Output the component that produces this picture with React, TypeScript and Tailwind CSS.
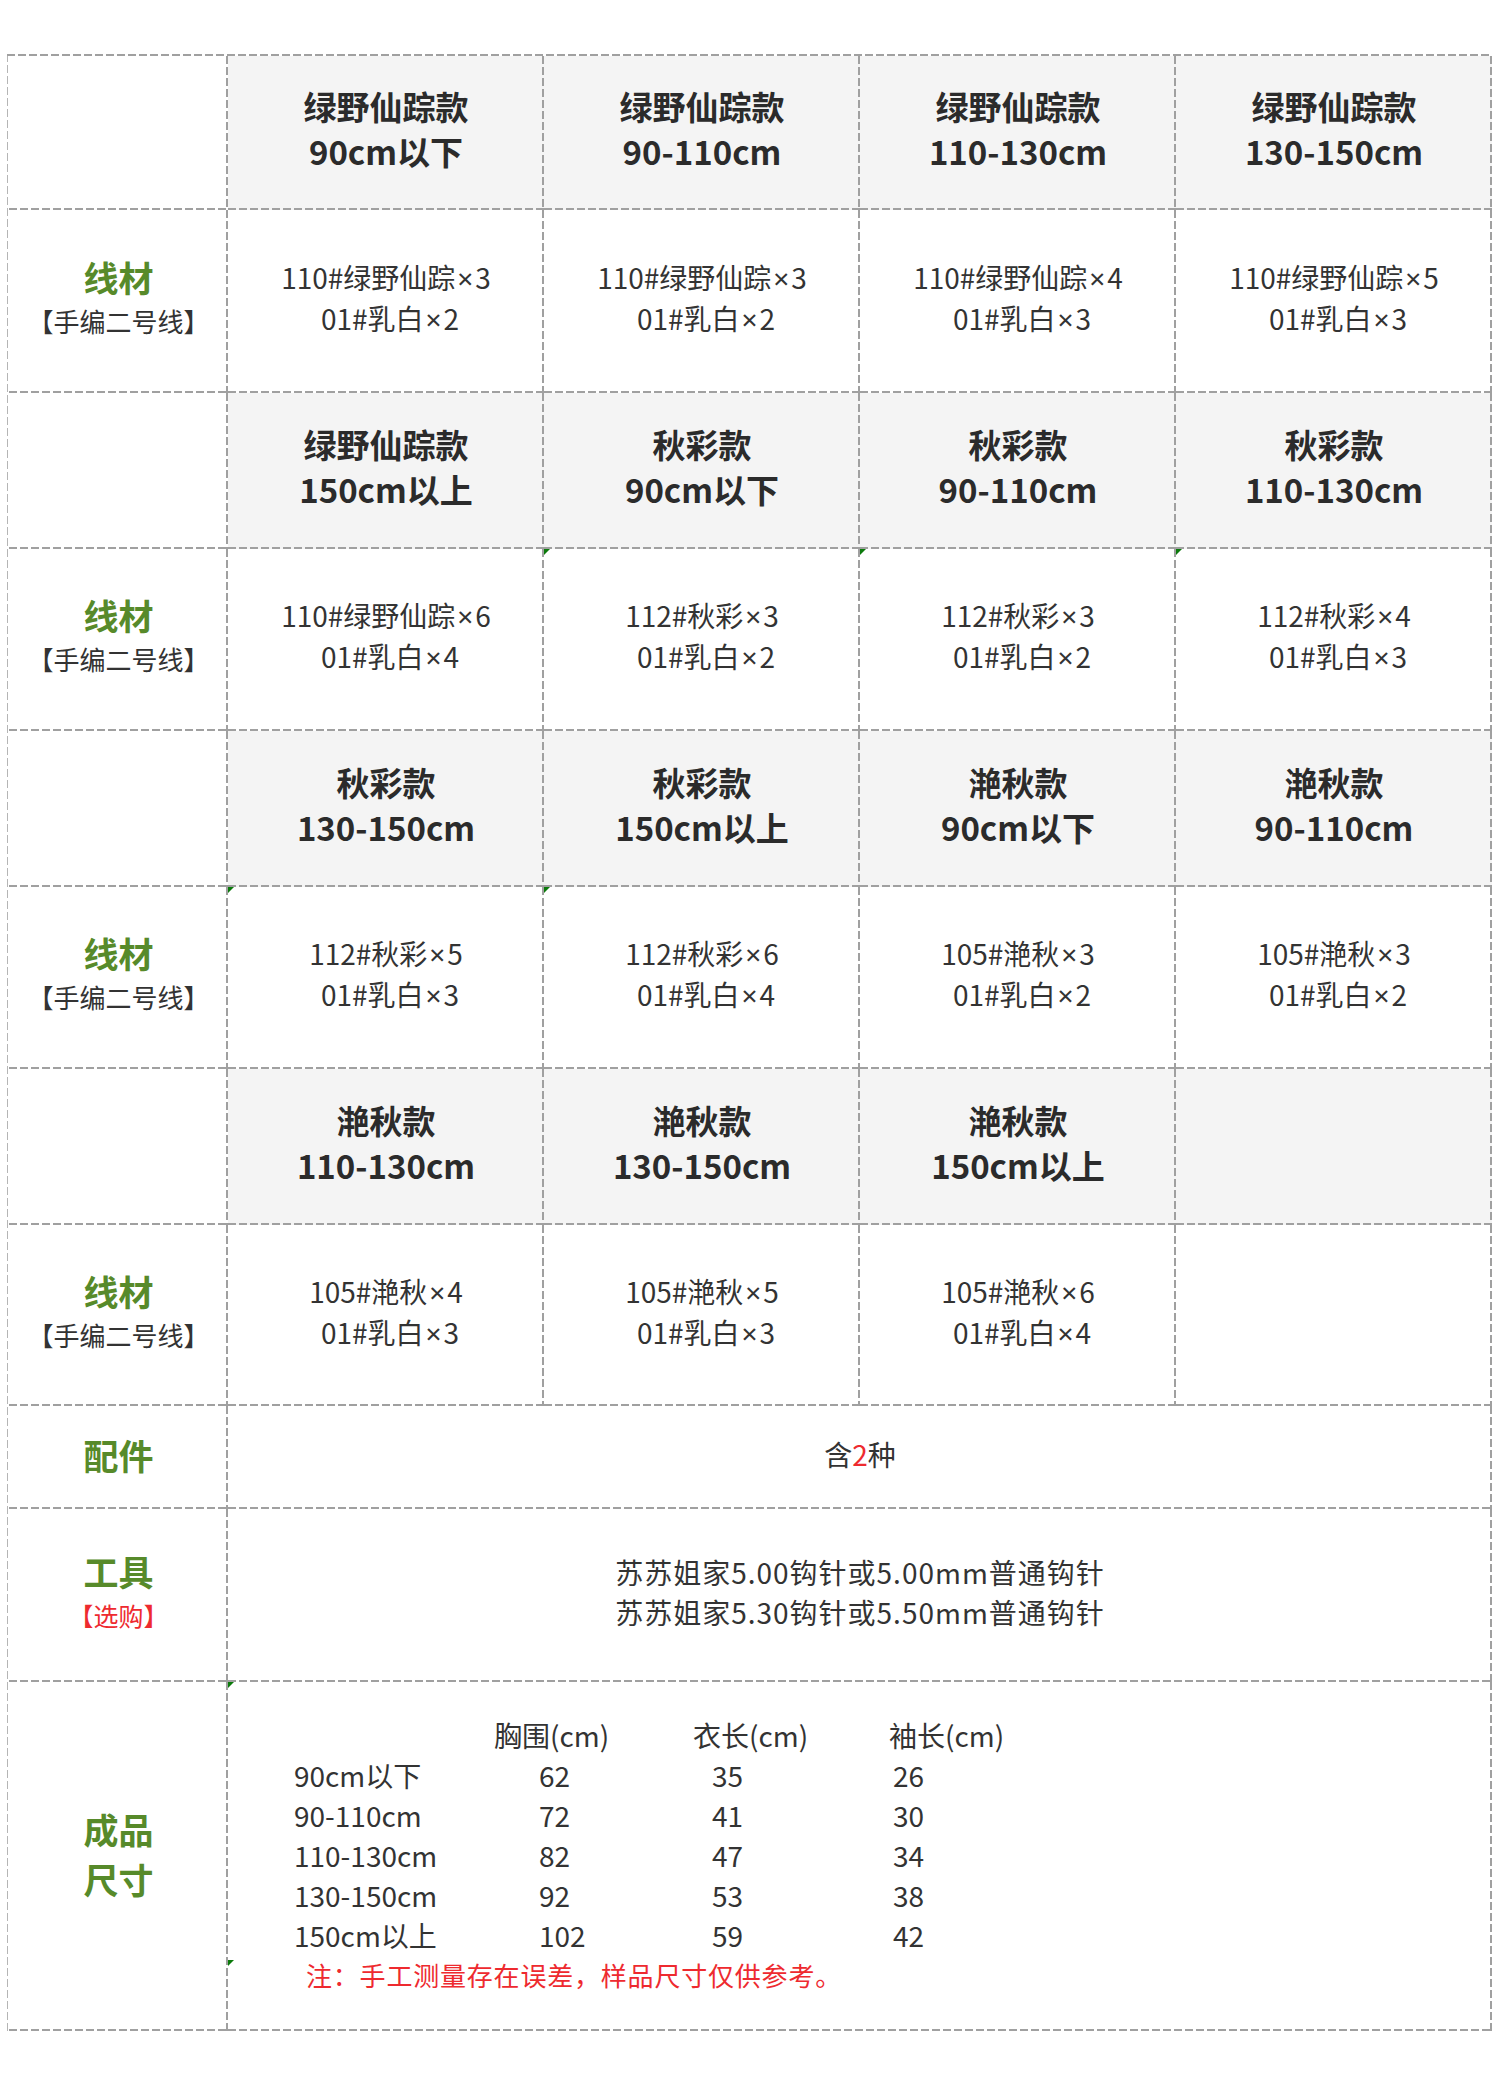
import React from "react";

const CELL =
  "relative [background-image:repeating-linear-gradient(90deg,#a0a0a0_0_8px,transparent_8px_11px),repeating-linear-gradient(180deg,#a0a0a0_0_8px,transparent_8px_11px)] [background-size:100%_2px,2px_100%] [background-position:left_bottom,right_top] bg-no-repeat";

type Pair = [string, string];
type Block = { heads: (Pair | null)[]; data: (Pair | null)[]; tri: number[] };

const blocks: Block[] = [
  {
    heads: [
      ["绿野仙踪款", "90cm以下"],
      ["绿野仙踪款", "90-110cm"],
      ["绿野仙踪款", "110-130cm"],
      ["绿野仙踪款", "130-150cm"],
    ],
    data: [
      ["110#绿野仙踪×3", "01#乳白×2"],
      ["110#绿野仙踪×3", "01#乳白×2"],
      ["110#绿野仙踪×4", "01#乳白×3"],
      ["110#绿野仙踪×5", "01#乳白×3"],
    ],
    tri: [],
  },
  {
    heads: [
      ["绿野仙踪款", "150cm以上"],
      ["秋彩款", "90cm以下"],
      ["秋彩款", "90-110cm"],
      ["秋彩款", "110-130cm"],
    ],
    data: [
      ["110#绿野仙踪×6", "01#乳白×4"],
      ["112#秋彩×3", "01#乳白×2"],
      ["112#秋彩×3", "01#乳白×2"],
      ["112#秋彩×4", "01#乳白×3"],
    ],
    tri: [1, 2, 3],
  },
  {
    heads: [
      ["秋彩款", "130-150cm"],
      ["秋彩款", "150cm以上"],
      ["滟秋款", "90cm以下"],
      ["滟秋款", "90-110cm"],
    ],
    data: [
      ["112#秋彩×5", "01#乳白×3"],
      ["112#秋彩×6", "01#乳白×4"],
      ["105#滟秋×3", "01#乳白×2"],
      ["105#滟秋×3", "01#乳白×2"],
    ],
    tri: [0, 1],
  },
  {
    heads: [
      ["滟秋款", "110-130cm"],
      ["滟秋款", "130-150cm"],
      ["滟秋款", "150cm以上"],
      null,
    ],
    data: [
      ["105#滟秋×4", "01#乳白×3"],
      ["105#滟秋×5", "01#乳白×3"],
      ["105#滟秋×6", "01#乳白×4"],
      null,
    ],
    tri: [],
  },
];

const Tri = ({ className = "" }: { className?: string }) => (
  <span
    className={
      "absolute left-0 h-0 w-0 border-t-[6px] border-r-[6px] border-t-[#0b7a0b] border-r-transparent " +
      className
    }
  />
);

const Mul = ({ text }: { text: string }) => {
  const parts = text.split("×");
  return (
    <>
      {parts[0]}
      <span className="mx-[2px] font-['Noto_Sans',sans-serif]">×</span>
      {parts[1]}
    </>
  );
};

const YarnLabel = () => (
  <div className={CELL + " flex flex-col items-center justify-center bg-white pb-[6px]"}>
    <div className="text-[35px] font-bold leading-[44px] text-[#578a2a]">线材</div>
    <div className="text-[26px] leading-[44px] text-[#333]">【手编二号线】</div>
  </div>
);

const sizes: [string, string, string, string][] = [
  ["90cm以下", "62", "35", "26"],
  ["90-110cm", "72", "41", "30"],
  ["110-130cm", "82", "47", "34"],
  ["130-150cm", "92", "53", "38"],
  ["150cm以上", "102", "59", "42"],
];

export default function App() {
  return (
    <div className="min-h-[2077px] w-[1500px] bg-white pl-[7px] pt-[54px] font-['Noto_Sans_CJK_SC',sans-serif] text-[#333]">
      <div className="w-[1485px] pl-[2px] pt-[2px] [background-image:repeating-linear-gradient(90deg,#a0a0a0_0_8px,transparent_8px_11px),repeating-linear-gradient(180deg,#b5b5b5_0_8px,transparent_8px_11px)] [background-size:100%_2px,1px_100%] [background-position:left_top,left_top] bg-no-repeat">
        <div className="grid grid-cols-[219px_316px_316px_316px_316px] grid-rows-[154px_183px_156px_182px_156px_182px_156px_181px_103px_173px_349px]">
          {blocks.map((b, bi) => (
            <React.Fragment key={bi}>
              <div className={CELL + " bg-white"} />
              {b.heads.map((h, i) => (
                <div
                  key={"h" + i}
                  className={CELL + " flex flex-col items-center justify-center bg-[#f4f4f4] pb-[8px] text-[33px] font-bold leading-[45px] text-[#2b2b2b]"}
                >
                  {h && (
                    <>
                      <div>{h[0]}</div>
                      <div>{h[1]}</div>
                    </>
                  )}
                </div>
              ))}
              <YarnLabel />
              {b.data.map((d, i) => (
                <div
                  key={"d" + i}
                  className={CELL + " flex flex-col items-center justify-center bg-white pb-[8px] text-[28px] leading-[40px] text-[#333]"}
                >
                  {b.tri.includes(i) && <Tri className="top-0" />}
                  {d && (
                    <>
                      <div>
                        <Mul text={d[0]} />
                      </div>
                      <div className="pl-[8px]">
                        <Mul text={d[1]} />
                      </div>
                    </>
                  )}
                </div>
              ))}
            </React.Fragment>
          ))}

          {/* 配件 */}
          <div className={CELL + " flex items-center justify-center bg-white pb-[6px]"}>
            <div className="text-[35px] font-bold leading-[44px] text-[#578a2a]">配件</div>
          </div>
          <div className={CELL + " col-span-4 flex items-center justify-center bg-white pb-[8px] text-[28px] leading-[40px]"}>
            <span>
              含<span className="text-[#ee2a2f]">2</span>种
            </span>
          </div>

          {/* 工具 */}
          <div className={CELL + " flex flex-col items-center justify-center bg-white pb-[6px]"}>
            <div className="text-[35px] font-bold leading-[44px] text-[#578a2a]">工具</div>
            <div className="text-[25px] leading-[44px] text-[#ee2a2f]">【选购】</div>
          </div>
          <div className={CELL + " col-span-4 flex flex-col items-center justify-center bg-white pb-[8px] text-[28px] leading-[40px] tracking-[1px]"}>
            <div>苏苏姐家5.00钩针或5.00mm普通钩针</div>
            <div>苏苏姐家5.30钩针或5.50mm普通钩针</div>
          </div>

          {/* 成品尺寸 */}
          <div className={CELL + " flex flex-col items-center justify-center bg-white pb-[6px]"}>
            <div className="text-[35px] font-bold leading-[50px] text-[#578a2a]">成品</div>
            <div className="text-[35px] font-bold leading-[50px] text-[#578a2a]">尺寸</div>
          </div>
          <div className={CELL + " col-span-4 flex flex-col justify-center bg-white pb-[4px] pl-[66px] text-[28px] leading-[40px]"}>
            <Tri className="top-0" />
            <Tri className="top-[278px]" />
            <div className="grid grid-cols-[200px_199px_196px_200px]">
              <div />
              <div>胸围(cm)</div>
              <div>衣长(cm)</div>
              <div>袖长(cm)</div>
              {sizes.map((r) => (
                <React.Fragment key={r[0]}>
                  <div>{r[0]}</div>
                  <div className="pl-[45px]">{r[1]}</div>
                  <div className="pl-[19px]">{r[2]}</div>
                  <div className="pl-[4px]">{r[3]}</div>
                </React.Fragment>
              ))}
            </div>
            <div className="pl-[12px] text-[26px] leading-[40px] tracking-[0.8px] text-[#ee2a2f]">
              注：手工测量存在误差，样品尺寸仅供参考。
            </div>
          </div>
        </div>
      </div>
    </div>
  );
}
